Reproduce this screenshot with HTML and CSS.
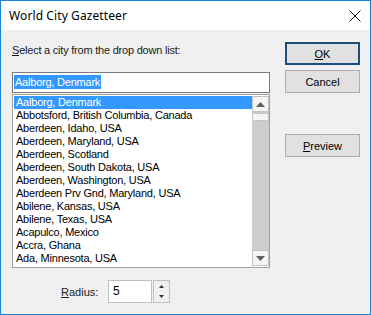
FILE: index.html
```html
<!DOCTYPE html>
<html lang="en">
<head>
    <meta charset="UTF-8">
    <title>World City Gazetteer</title>
    <link rel="stylesheet" href="styles.css">
</head>
<body>
    <div class="window">
        <div class="titlebar">
            <span class="title">World City Gazetteer</span>
            <svg class="close" width="12" height="12" viewBox="0 0 12 12">
                <path d="M0.5 0.5 L11.5 11.5 M11.5 0.5 L0.5 11.5" stroke="#111" stroke-width="1" fill="none"/>
            </svg>
        </div>

        <div class="client">
            <div class="main">
                <label class="prompt"><u>S</u>elect a city from the drop down list:</label>
                <div class="combo-edit"><span class="sel">Aalborg, Denmark</span></div>

                <div class="listbox">
                    <ul class="items">
                        <li class="selected">Aalborg, Denmark</li>
                        <li>Abbotsford, British Columbia, Canada</li>
                        <li>Aberdeen, Idaho, USA</li>
                        <li>Aberdeen, Maryland, USA</li>
                        <li>Aberdeen, Scotland</li>
                        <li>Aberdeen, South Dakota, USA</li>
                        <li>Aberdeen, Washington, USA</li>
                        <li>Aberdeen Prv Gnd, Maryland, USA</li>
                        <li>Abilene, Kansas, USA</li>
                        <li>Abilene, Texas, USA</li>
                        <li>Acapulco, Mexico</li>
                        <li>Accra, Ghana</li>
                        <li>Ada, Minnesota, USA</li>
                    </ul>
                    <div class="scrollbar">
                        <div class="sb-btn">
                            <svg width="9" height="5" viewBox="0 0 9 5"><path d="M4.5 0 L9 5 L0 5 Z" fill="#606060"/></svg>
                        </div>
                        <div class="sb-thumb"></div>
                        <div class="sb-track"></div>
                        <div class="sb-btn">
                            <svg width="9" height="5" viewBox="0 0 9 5"><path d="M0 0 L9 0 L4.5 5 Z" fill="#606060"/></svg>
                        </div>
                    </div>
                </div>

                <div class="radius-row">
                    <label class="radius-label"><u>R</u>adius:</label>
                    <div class="spin-edit">5</div>
                    <div class="spin">
                        <div class="spin-half">
                            <svg width="5" height="3" viewBox="0 0 5 3"><path d="M2.5 0 L5 3 L0 3 Z" fill="#333"/></svg>
                        </div>
                        <div class="spin-half">
                            <svg width="5" height="3" viewBox="0 0 5 3"><path d="M0 0 L5 0 L2.5 3 Z" fill="#333"/></svg>
                        </div>
                    </div>
                </div>
            </div>

            <div class="buttons">
                <button class="btn default"><u>O</u>K</button>
                <button class="btn">Cancel</button>
                <button class="btn preview"><u>P</u>review</button>
            </div>
        </div>
    </div>
</body>
</html>
```

FILE: styles.css
```css
/* Windows dialog look */
:root {
    --frame: #1883d7;
    --face: #f0f0f0;
    --btn-face: #e1e1e1;
    --btn-border: #adadad;
    --highlight: #3399ff;
    --edit-border: #7a7a7a;
    --list-border: #a0a0a0;
    --text: #000000;
}

* {
    margin: 0;
    padding: 0;
    box-sizing: border-box;
}

body {
    width: 371px;
    height: 315px;
    overflow: hidden;
    font-family: 'Liberation Sans', Arial, sans-serif;
    font-size: 11px;
    letter-spacing: -0.22px;
    color: var(--text);
}

.window {
    width: 371px;
    height: 315px;
    border: 1px solid var(--frame);
    background-color: var(--face);
    display: flex;
    flex-direction: column;
}

.titlebar {
    height: 29px;
    background-color: #ffffff;
    display: flex;
    align-items: center;
    justify-content: space-between;
    padding: 0 9px 0 8px;
}

.title {
    font-family: 'Noto Sans', sans-serif;
    font-size: 12px;
    letter-spacing: 0.1px;
}

.close {
    display: block;
    margin-top: 1px;
}

.client {
    display: flex;
    padding-left: 11px;
}

.main {
    width: 258px;
    display: flex;
    flex-direction: column;
}

.prompt {
    margin-top: 14px;
    line-height: 13px;
    height: 13px;
    color: #1a1a1a;
}

.combo-edit {
    margin-top: 15px;
    height: 21px;
    border: 1px solid var(--edit-border);
    background-color: #ffffff;
    padding: 2px 0 0 1px;
}

.sel {
    display: inline-block;
    background-color: var(--highlight);
    color: #ffffff;
    line-height: 14px;
    padding: 0 1px;
}

.listbox {
    margin-top: 1px;
    height: 174px;
    border: 1px solid var(--list-border);
    background-color: #ffffff;
    display: flex;
    padding: 1px 0 1px 1px;
}

.items {
    list-style: none;
    flex: 1;
    overflow: hidden;
}

.items li {
    height: 13px;
    line-height: 13px;
    padding-left: 2px;
    white-space: nowrap;
}

.items li.selected {
    background-color: var(--highlight);
    color: #ffffff;
}

.scrollbar {
    width: 17px;
    display: flex;
    flex-direction: column;
    background-color: #cdcdcd;
}

.sb-btn {
    height: 16px;
    border: 1px solid #c4c4c4;
    background-color: #f5f5f5;
    display: flex;
    align-items: center;
    justify-content: center;
}

.sb-thumb {
    height: 8px;
    margin-top: 1px;
    border: 1px solid #c4c4c4;
    background-color: #f5f5f5;
}

.sb-track {
    flex: 1;
}

.radius-row {
    margin-top: 12px;
    display: flex;
    align-items: center;
    padding-left: 49px;
    letter-spacing: 0;
}

.radius-label {
    width: 47px;
    color: #1a1a1a;
}

.spin-edit {
    width: 44px;
    height: 23px;
    border: 1px solid #c0c0c0;
    background-color: #ffffff;
    padding: 3px 0 0 4px;
    font-size: 12px;
}

.spin {
    margin-left: 1px;
    width: 17px;
    height: 23px;
    border: 1px solid #c0c0c0;
    display: flex;
    flex-direction: column;
}

.spin-half {
    flex: 1;
    display: flex;
    align-items: center;
    justify-content: center;
}

.buttons {
    margin-left: 15px;
    margin-top: 12px;
    width: 75px;
    display: flex;
    flex-direction: column;
    gap: 5px;
}

.btn {
    height: 23px;
    border: 1px solid var(--btn-border);
    background-color: var(--btn-face);
    font-family: 'Liberation Sans', Arial, sans-serif;
    font-size: 11px;
    color: var(--text);
}

.btn.default {
    border: 2px solid #1c4f7d;
}

.btn.preview {
    margin-top: 36px;
}
```
